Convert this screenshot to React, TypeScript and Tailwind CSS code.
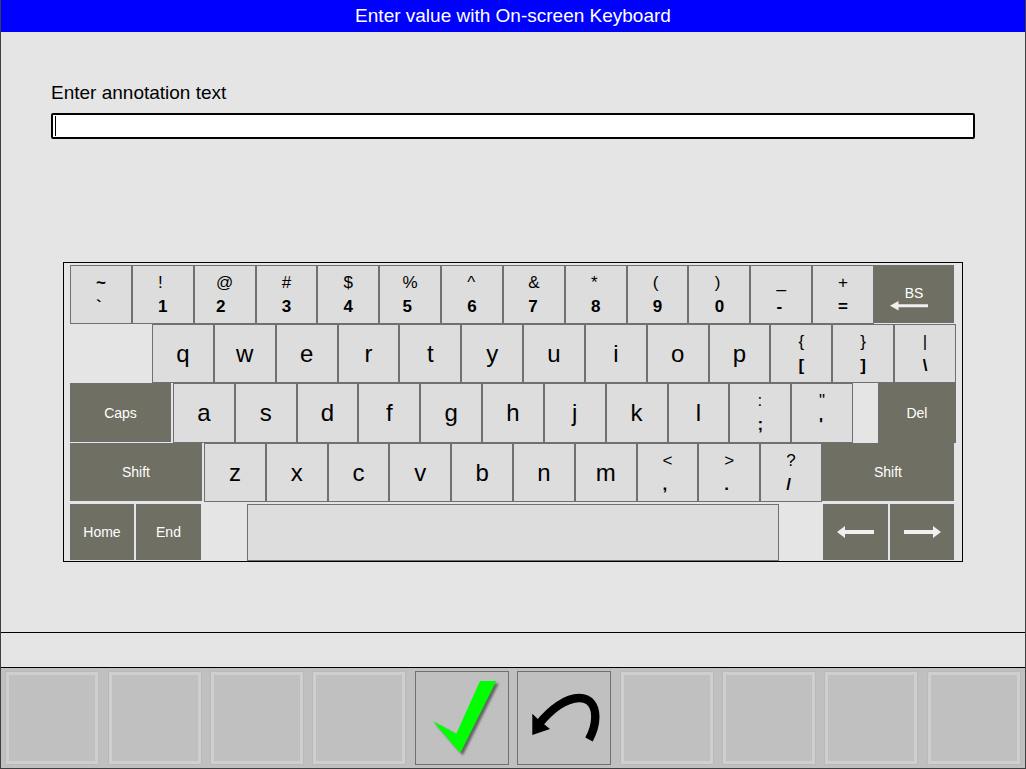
import type { ReactNode } from 'react';

type CharKeyProps = { lower: string; upper?: string };

function CharKey({ lower, upper }: CharKeyProps) {
  return (
    <button
      type="button"
      className="flex min-w-0 flex-1 items-center justify-center border border-[#707070] bg-[#dddddd] text-2xl text-black"
    >
      {upper ? (
        <span className="flex flex-col text-left text-[17px] leading-6">
          <span className={upper === '~' ? 'font-bold' : ''}>{upper}</span>
          <span className="font-bold">{lower}</span>
        </span>
      ) : (
        lower
      )}
    </button>
  );
}

function ActionKey({ className, label, children }: { className: string; label: string; children?: ReactNode }) {
  return (
    <button
      type="button"
      aria-label={label}
      className={`flex shrink-0 flex-col items-center justify-center border border-[#6d6f6f] bg-[#706f63] text-sm leading-4 text-white ${className}`}
    >
      {children ?? label}
    </button>
  );
}

function Keys({ chars }: { chars: string[] }) {
  return (
    <>
      {chars.map((c) => (
        <CharKey key={c} lower={c[0]} upper={c[1]} />
      ))}
    </>
  );
}

const numberRow = ['`~', '1!', '2@', '3#', '4$', '5%', '6^', '7&', '8*', '9(', '0)', '-_', '=+'];
const topRow = ['q', 'w', 'e', 'r', 't', 'y', 'u', 'i', 'o', 'p', '[{', ']}', '\\|'];
const homeRow = ['a', 's', 'd', 'f', 'g', 'h', 'j', 'k', 'l', ';:', '\'"'];
const bottomRow = ['z', 'x', 'c', 'v', 'b', 'n', 'm', ',<', '.>', '/?'];

function Keyboard() {
  return (
    <section aria-label="On-screen keyboard" className="border border-black px-1.5 pt-0.5">
      <div className="flex h-[59px]">
        <Keys chars={numberRow} />
        <ActionKey className="mr-0.5 mb-px w-20 pt-2" label="BS">
          <span>BS</span>
          <svg width="48" height="10" viewBox="0 0 48 10" fill="#f0f0f0" aria-hidden="true">
            <path d="M0 4.7 8.5 0v3.2H38v3H8.500v3.200Z" />
          </svg>
        </ActionKey>
      </div>
      <div className="flex h-[59px] pl-[82px]">
        <Keys chars={topRow} />
      </div>
      <div className="flex h-[60px]">
        <ActionKey className="mr-0.5 mb-px w-[101px]" label="Caps" />
        <Keys chars={homeRow} />
        <ActionKey className="ml-[25px] w-[78px]" label="Del" />
      </div>
      <div className="flex h-[59px]">
        <ActionKey className="mr-0.5 mb-px w-[132px]" label="Shift" />
        <Keys chars={bottomRow} />
        <ActionKey className="mr-0.5 mb-px w-[132px]" label="Shift" />
      </div>
      <div className="mt-0.5 flex h-[57px]">
        <ActionKey className="mr-0.5 mb-px w-16" label="Home" />
        <ActionKey className="mb-px w-[65px]" label="End" />
        <button
          type="button"
          aria-label="Space"
          className="mr-11 ml-[46px] flex-1 border border-[#707070] bg-[#dddddd]"
        />
        <ActionKey className="mr-0.5 mb-px w-[65px]" label="Left">
          <svg width="37" height="12" viewBox="0 0 37 12" fill="#f0f0f0" aria-hidden="true">
            <path d="M0 6 8 0v4h29v4H8v4Z" />
          </svg>
        </ActionKey>
        <ActionKey className="mr-0.5 mb-px w-16" label="Right">
          <svg width="37" height="12" viewBox="0 0 37 12" fill="#f0f0f0" aria-hidden="true">
            <path d="M37 6 29 0v4H0v4h29v4Z" />
          </svg>
        </ActionKey>
      </div>
    </section>
  );
}

function CheckIcon() {
  return (
    <svg width="92" height="92" viewBox="1 1 92 92" aria-hidden="true">
      <defs>
        <filter id="soft" x="-10%" y="-10%" width="120%" height="120%">
          <feGaussianBlur stdDeviation="0.9" />
        </filter>
      </defs>
      <path
        d="M17.700 50 41.300 62.700 65 10H81.300L45.300 82Z"
        transform="translate(2.500 2.500)"
        fill="#666"
        filter="url(#soft)"
      />
      <path d="M17.700 50 41.300 62.700 65 10H81.300L45.300 82Z" fill="#00ff00" />
    </svg>
  );
}

function UndoIcon() {
  return (
    <svg width="92" height="92" viewBox="1 1 92 92" aria-hidden="true">
      <path
        d="M22 53C34 38 49 27 62.300 27 73 27 78.300 35 78.300 46 78.300 54 76 61 72 68.500"
        fill="none"
        stroke="#000"
        strokeWidth="8.400"
      />
      <path d="M15.300 42.700 20.300 47.500 27.500 53.500 33 58 15.300 64Z" />
    </svg>
  );
}

const softKeys: { label: string; icon?: ReactNode }[] = [
  { label: 'F1' },
  { label: 'F2' },
  { label: 'F3' },
  { label: 'F4' },
  { label: 'Accept', icon: <CheckIcon /> },
  { label: 'Back', icon: <UndoIcon /> },
  { label: 'F7' },
  { label: 'F8' },
  { label: 'F9' },
  { label: 'F10' },
];

export default function App() {
  return (
    <div className="flex min-h-screen flex-col border-x border-b border-[#3f3f42] bg-[#e5e5e5] font-['Liberation_Sans',Arial,sans-serif] text-black">
      <header className="bg-[#0000ff] text-center text-[19px] leading-8 text-white">
        <h1>Enter value with On-screen Keyboard</h1>
      </header>

      <main className="flex-1 px-[50px] pt-[49px]">
        <label htmlFor="annotation" className="block text-[19px] leading-6">
          Enter annotation text
        </label>
        <div className="relative mt-2">
          <input
            id="annotation"
            type="text"
            className="block h-[26px] w-full rounded-[2px] border-2 border-black bg-white px-0.5 text-[19px] outline-none"
          />
          <span className="absolute top-[3px] left-1 h-5 w-px bg-black" />
        </div>
        <div className="mt-[123px] px-3">
          <Keyboard />
        </div>
      </main>

      <div role="status" className="h-9 border-y border-black" />

      <footer className="grid grid-cols-10 justify-items-center bg-[#c0c0c0] py-[3px]">
        {softKeys.map(({ label, icon }) =>
          icon ? (
            <button key={label} type="button" aria-label={label} className="size-[94px] border border-[#707070]">
              {icon}
            </button>
          ) : (
            <button
              key={label}
              type="button"
              disabled
              aria-label={label}
              className="size-[94px] border border-[#bababa]"
            >
              <span className="block size-full border-3 border-[#cfcfcf]" />
            </button>
          ),
        )}
      </footer>
    </div>
  );
}
